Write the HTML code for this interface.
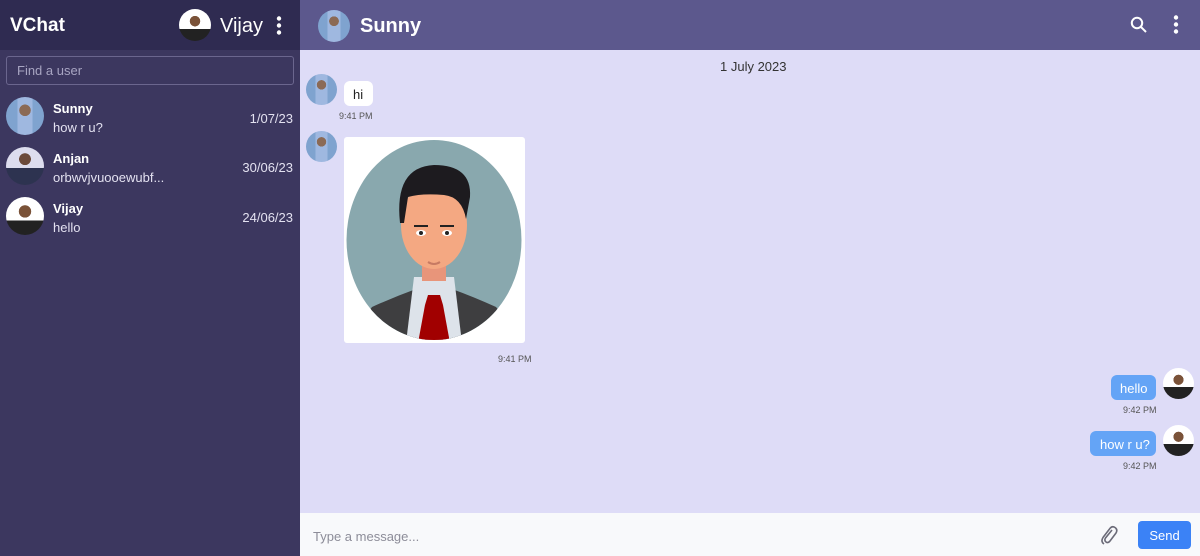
<!DOCTYPE html>
<html><head><meta charset="utf-8"><style>
*{box-sizing:border-box;margin:0;padding:0}
body{width:1200px;height:556px;overflow:hidden;font-family:"Liberation Sans",sans-serif;position:relative;background:#dedcf7}
.side{position:absolute;left:0;top:0;width:300px;height:556px;background:#3c375f}
.sh{height:50px;background:#2f2b51;position:relative;color:#fff}
.abs{position:absolute}
.av{position:absolute;border-radius:50%;overflow:hidden}
.p1{background:radial-gradient(circle at 50% 35%,#8b6a55 0 18%,transparent 19%),linear-gradient(90deg,#7fa3cf 0 30%,#9fb8e0 30% 70%,#7fa3cf 70%),#8fb0d8}
.p2{background:radial-gradient(circle at 50% 32%,#6b4a3a 0 18%,transparent 19%),linear-gradient(#dde 0 55%,#2d3350 55%)}
.p3{background:radial-gradient(circle at 50% 38%,#7a5238 0 20%,transparent 21%),linear-gradient(#fff 0 62%,#222 62%)}
.search{position:absolute;left:6px;top:56px;width:288px;height:29px;border:1px solid #6b668e;border-radius:3px;color:#a8a5c2;font-size:13px;padding:6px 10px}
.u .n{position:absolute;left:53px;color:#fff;font-weight:bold;font-size:13px}
.u .m{position:absolute;left:53px;color:#e3e1f0;font-size:13px}
.u .d{position:absolute;right:7px;color:#e3e1f0;font-size:13px}
.ch{position:absolute;left:300px;top:0;width:900px;height:50px;background:#5c588d;color:#fff}
.tm{position:absolute;font-size:9px;color:#555}
.bb{position:absolute;font-size:13px;border-radius:6px;padding:0}
.foot{position:absolute;left:300px;top:513px;width:900px;height:43px;background:#f8f9fb}
</style></head><body>
<div class="side">
 <div class="sh">
  <div class="abs" style="left:10px;top:15px;font-size:19px;font-weight:bold">VChat</div>
  <div class="av p3" style="left:179px;top:9px;width:32px;height:32px"></div>
  <div class="abs" style="left:220px;top:15px;font-size:20px">Vijay</div>
  <svg class="abs" style="left:274px;top:16px" width="10" height="20"><circle cx="5" cy="2.5" r="2.2" fill="#fff"/><circle cx="5" cy="9.5" r="2.2" fill="#fff"/><circle cx="5" cy="16.5" r="2.2" fill="#fff"/></svg>
 </div>
 <div class="search">Find a user</div>
 <div class="u">
  <div class="av p1" style="left:6px;top:97px;width:38px;height:38px"></div>
  <div class="n" style="top:101px">Sunny</div><div class="m" style="top:120px">how r u?</div><div class="d" style="top:111px">1/07/23</div>
  <div class="av p2" style="left:6px;top:147px;width:38px;height:38px"></div>
  <div class="n" style="top:151px">Anjan</div><div class="m" style="top:170px">orbwvjvuooewubf...</div><div class="d" style="top:160px">30/06/23</div>
  <div class="av p3" style="left:6px;top:197px;width:38px;height:38px"></div>
  <div class="n" style="top:201px">Vijay</div><div class="m" style="top:220px">hello</div><div class="d" style="top:210px">24/06/23</div>
 </div>
</div>
<div class="ch">
 <div class="av p1" style="left:18px;top:10px;width:32px;height:32px"></div>
 <div class="abs" style="left:60px;top:15px;font-size:20px;font-weight:bold">Sunny</div>
 <svg class="abs" style="left:830px;top:16px" width="18" height="18" fill="none" stroke="#fff" stroke-width="2"><circle cx="7" cy="7" r="5.2"/><path d="M11 11l5 5"/></svg>
 <svg class="abs" style="left:871px;top:15px" width="10" height="20"><circle cx="5" cy="2.5" r="2.2" fill="#fff"/><circle cx="5" cy="9.5" r="2.2" fill="#fff"/><circle cx="5" cy="16.5" r="2.2" fill="#fff"/></svg>
</div>
<div class="abs" style="left:720px;top:59px;font-size:13px;color:#333">1 July 2023</div>
<div class="av p1" style="left:306px;top:74px;width:31px;height:31px"></div>
<div class="bb" style="left:344px;top:81px;width:29px;height:25px;background:#fff;color:#222;padding:6px 0 0 9px">hi</div>
<div class="tm" style="left:339px;top:111px">9:41 PM</div>
<div class="av p1" style="left:306px;top:131px;width:31px;height:31px"></div>
<div class="abs" style="left:344px;top:137px;width:181px;height:206px;background:#fff;border-radius:3px">
<svg width="181" height="206" viewBox="0 0 181 206">
<defs><clipPath id="o"><ellipse cx="90" cy="103" rx="87.5" ry="100"/></clipPath></defs>
<ellipse cx="90" cy="103" rx="87.5" ry="100" fill="#89a8ae"/>
<g clip-path="url(#o)">
<path d="M0 206 L28 170 Q50 160 72 152 L108 152 Q130 160 152 170 L181 206Z" fill="#3e3e40"/>
<path d="M70 140 L110 140 L118 206 L62 206Z" fill="#dde3ea"/>
<path d="M84 158 L96 158 L99 168 L106 206 L74 206 L81 168Z" fill="#a10000"/>
<rect x="78" y="118" width="24" height="26" fill="#e8957a"/>
<ellipse cx="90" cy="88" rx="33" ry="44" fill="#f4a882"/>
<path d="M56 86 Q50 30 90 28 Q128 28 126 60 L122 82 Q118 60 100 58 Q78 56 64 60 L60 86Z" fill="#1d1b1f"/>
<ellipse cx="77" cy="96" rx="5" ry="3" fill="#fff"/><circle cx="77" cy="96" r="2" fill="#222"/>
<ellipse cx="103" cy="96" rx="5" ry="3" fill="#fff"/><circle cx="103" cy="96" r="2" fill="#222"/>
<path d="M70 89 L84 89 M96 89 L110 89" stroke="#222" stroke-width="2"/>
<path d="M84 125 Q90 129 96 125" stroke="#c77a63" stroke-width="2" fill="none"/>
</g></svg></div>
<div class="tm" style="left:498px;top:354px">9:41 PM</div>
<div class="bb" style="left:1111px;top:375px;width:45px;height:25px;background:#64a4f6;color:#fff;padding:6px 0 0 9px">hello</div>
<div class="av p3" style="left:1163px;top:368px;width:31px;height:31px"></div>
<div class="tm" style="left:1123px;top:405px">9:42 PM</div>
<div class="bb" style="left:1090px;top:431px;width:66px;height:25px;background:#64a4f6;color:#fff;padding:6px 0 0 10px">how r u?</div>
<div class="av p3" style="left:1163px;top:425px;width:31px;height:31px"></div>
<div class="tm" style="left:1123px;top:461px">9:42 PM</div>
<div class="foot">
 <div class="abs" style="left:13px;top:16px;font-size:13px;color:#8d8d99">Type a message...</div>
 <svg class="abs" style="left:800px;top:11px" width="18" height="22" viewBox="0 0 18 22" fill="none" stroke="#6b6b78" stroke-width="1.6"><path d="M12 6 L5.5 14 Q4 16.5 6 18 Q8 19.5 10 17 L16 9 Q18 5.5 15 3.5 Q12 1.5 9.5 5 L3 13.5 Q0.5 17.5 4 20"/></svg>
 <div class="abs" style="left:838px;top:8px;width:53px;height:28px;background:#3b82f6;border-radius:4px;color:#fff;font-size:13px;text-align:center;line-height:30px">Send</div>
</div>
</body></html>
